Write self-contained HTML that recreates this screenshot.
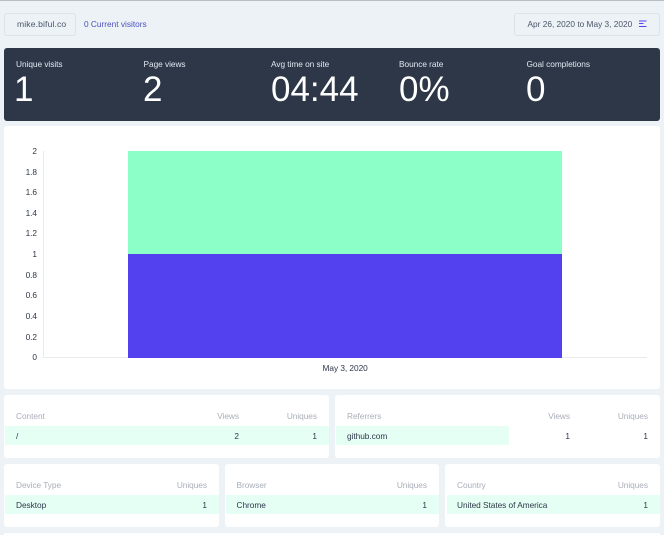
<!DOCTYPE html>
<html>
<head>
<meta charset="utf-8">
<style>
html,body{margin:0;padding:0;width:664px;height:535px;overflow:hidden}
body{position:relative;background:#edf2f7;font-family:"Liberation Sans",sans-serif;color:#2d3748}
div,span{position:absolute;white-space:nowrap}
.card{background:#fff;border-radius:3px}
.btn{background:#edf2f7;border:1px solid #dde2e9;border-radius:3px;box-sizing:border-box;height:23px;top:13px}
.t{font-size:8.3px;line-height:10px;letter-spacing:-.04px}
.lab{color:#e2e8f0;top:59px}
.big{color:#fff;font-size:35px;line-height:36px;top:72px}
.h{color:#a9aeb8;top:411px}
.r{color:#2d3748}
.row{background:#e6fff5;height:19px}
.ax{font-size:8.3px;line-height:10px;letter-spacing:-.04px;color:#2d3748;text-align:right;width:20px;left:17px}
.ra{text-align:right}
</style>
</head>
<body>
<div style="left:0;top:0;width:664px;height:1px;background:#b9bec4"></div>

<div class="btn" style="left:4px;width:72px"></div>
<div class="t" style="left:17px;top:19px;color:#4a5568;font-size:8.6px;letter-spacing:.12px">mike.biful.co</div>
<div class="t" style="left:84px;top:19px;color:#4c51bf;letter-spacing:0">0 Current visitors</div>

<div class="btn" style="left:514px;width:146px"></div>
<div class="t" style="left:527.5px;top:19px;color:#4a5568;letter-spacing:0">Apr 26, 2020 to May 3, 2020</div>
<svg style="position:absolute;left:639px;top:20px" width="9" height="8" viewBox="0 0 9 8"><path d="M0 1h7.5M0 3.5h4.5M0 6.5h7.5" stroke="#5340ee" stroke-width="1" fill="none"/></svg>

<div style="left:4px;top:47.5px;width:656px;height:73px;background:#2d3748;border-radius:3px"></div>
<div class="t lab" style="left:16px">Unique visits</div>
<div class="t lab" style="left:143.5px">Page views</div>
<div class="t lab" style="left:271px">Avg time on site</div>
<div class="t lab" style="left:399px">Bounce rate</div>
<div class="t lab" style="left:526.5px">Goal completions</div>
<div class="big" style="left:14px">1</div>
<div class="big" style="left:143px">2</div>
<div class="big" style="left:271px">04:44</div>
<div class="big" style="left:399px">0%</div>
<div class="big" style="left:526px">0</div>

<div class="card" style="left:4px;top:126px;width:656px;height:263px"></div>
<div class="ax" style="top:146px">2</div>
<div class="ax" style="top:167px">1.8</div>
<div class="ax" style="top:187px">1.6</div>
<div class="ax" style="top:208px">1.4</div>
<div class="ax" style="top:228px">1.2</div>
<div class="ax" style="top:249px">1</div>
<div class="ax" style="top:270px">0.8</div>
<div class="ax" style="top:290px">0.6</div>
<div class="ax" style="top:311px">0.4</div>
<div class="ax" style="top:332px">0.2</div>
<div class="ax" style="top:352px">0</div>
<div style="left:43px;top:151px;width:1px;height:207px;background:#e8eaed"></div>
<div style="left:43px;top:357px;width:604px;height:1px;background:#e8eaed"></div>
<div style="left:128px;top:151px;width:434px;height:103px;background:#8cffc8"></div>
<div style="left:128px;top:254px;width:434px;height:103.5px;background:#5340ee"></div>
<div class="t" style="left:322.5px;top:363px;color:#2d3748">May 3, 2020</div>

<div class="card" style="left:4px;top:395px;width:325px;height:63px"></div>
<div class="row" style="left:5px;top:426px;width:324px"></div>
<div class="t h" style="left:16px">Content</div>
<div class="t h ra" style="right:425px">Views</div>
<div class="t h ra" style="right:347px">Uniques</div>
<div class="t r" style="left:16px;top:431px">/</div>
<div class="t r" style="right:425px;top:431px">2</div>
<div class="t r" style="right:347px;top:431px">1</div>

<div class="card" style="left:335px;top:395px;width:325px;height:63px"></div>
<div class="row" style="left:336px;top:426px;width:173px;border-radius:1px"></div>
<div class="t h" style="left:347px">Referrers</div>
<div class="t h ra" style="right:94px">Views</div>
<div class="t h ra" style="right:16px">Uniques</div>
<div class="t r" style="left:347px;top:431px">github.com</div>
<div class="t r" style="right:94px;top:431px">1</div>
<div class="t r" style="right:16px;top:431px">1</div>

<div class="card" style="left:4px;top:464px;width:215px;height:63px"></div>
<div class="row" style="left:5px;top:495px;width:214px"></div>
<div class="t h" style="left:16px;top:480px">Device Type</div>
<div class="t h ra" style="right:457px;top:480px">Uniques</div>
<div class="t r" style="left:16px;top:500px">Desktop</div>
<div class="t r" style="right:457px;top:500px">1</div>

<div class="card" style="left:225px;top:464px;width:214px;height:63px"></div>
<div class="row" style="left:226px;top:495px;width:213px"></div>
<div class="t h" style="left:236.5px;top:480px">Browser</div>
<div class="t h ra" style="right:237px;top:480px">Uniques</div>
<div class="t r" style="left:236.5px;top:500px">Chrome</div>
<div class="t r" style="right:237px;top:500px">1</div>

<div class="card" style="left:445px;top:464px;width:215px;height:63px"></div>
<div class="row" style="left:447px;top:495px;width:213px"></div>
<div class="t h" style="left:457px;top:480px">Country</div>
<div class="t h ra" style="right:16px;top:480px">Uniques</div>
<div class="t r" style="left:457px;top:500px">United States of America</div>
<div class="t r" style="right:16px;top:500px">1</div>

<div class="card" style="left:4px;top:533px;width:656px;height:2px"></div>
</body>
</html>
